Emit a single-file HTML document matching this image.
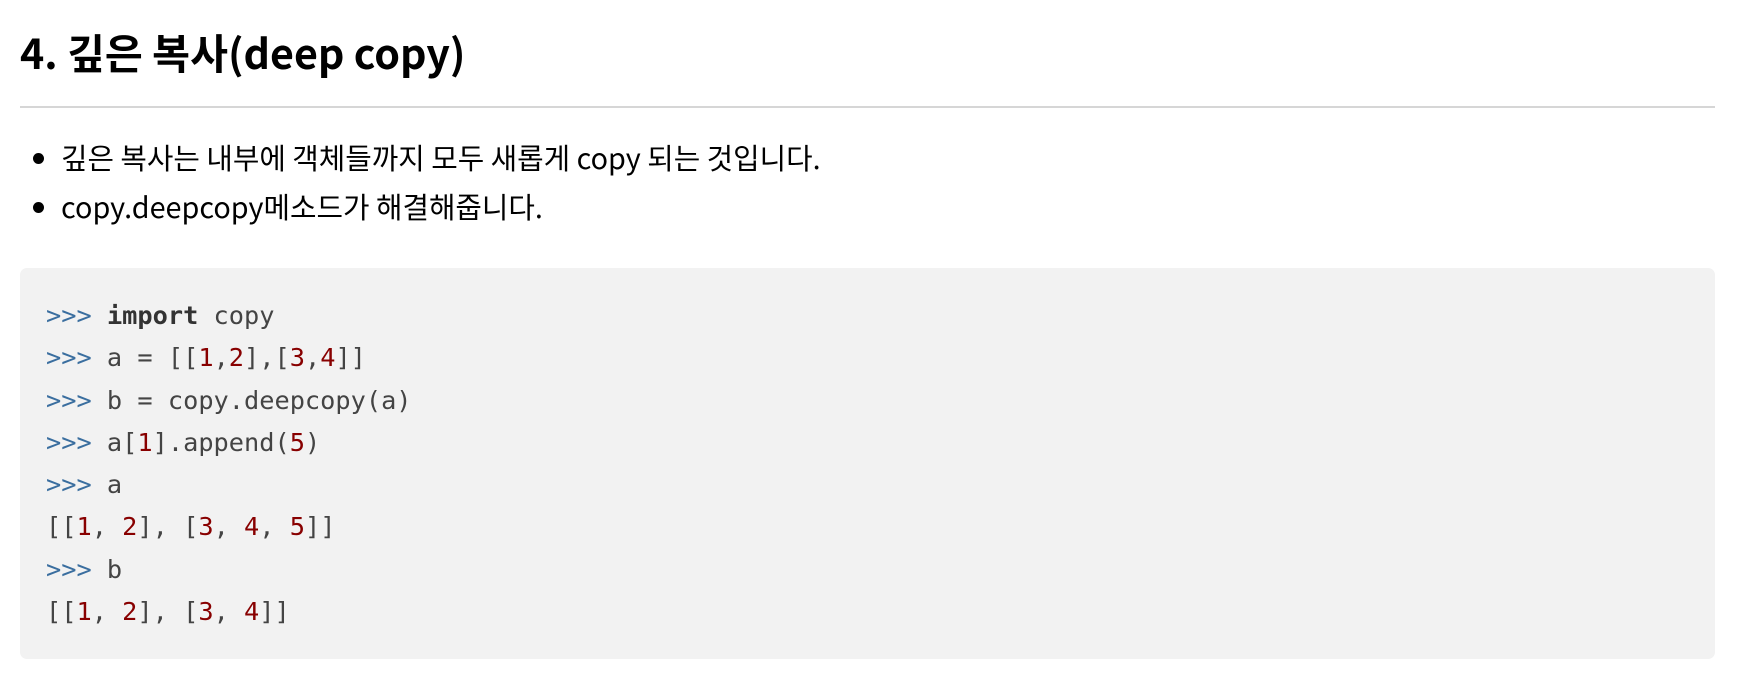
<!DOCTYPE html>
<html><head><meta charset="utf-8"><style>
body{margin:0;background:#fff;width:1744px;height:688px;overflow:hidden;font-family:"Noto Sans CJK KR","Liberation Sans",sans-serif;color:#000}
h1{position:absolute;left:20px;top:24px;margin:0;font-size:41.2px;line-height:54px;font-weight:bold}
.hr{position:absolute;left:20px;top:106px;width:1695px;height:2px;background:#d6d6d6}
ul{position:absolute;left:0;top:133px;margin:0;padding:0 0 0 61px;font-size:28.8px;line-height:49px}
li{margin:0}
pre{position:absolute;left:20px;top:268px;width:1695px;height:391px;margin:0;background:#f2f2f2;border-radius:7px;box-sizing:border-box;padding:27px 26px;font-family:"DejaVu Sans Mono","Liberation Mono",monospace;font-size:25.3px;line-height:42.3px;color:#444}
.p{color:#3a6e9f}.n{color:#880000}b{color:#333}
</style></head><body>
<h1>4. 깊은 복사(deep copy)</h1>
<div class="hr"></div>
<ul><li>깊은 복사는 내부에 객체들까지 모두 새롭게 copy 되는 것입니다.</li><li>copy.deepcopy메소드가 해결해줍니다.</li></ul>
<pre><span class="p">&gt;&gt;&gt;</span> <b>import</b> copy
<span class="p">&gt;&gt;&gt;</span> a = [[<span class="n">1</span>,<span class="n">2</span>],[<span class="n">3</span>,<span class="n">4</span>]]
<span class="p">&gt;&gt;&gt;</span> b = copy.deepcopy(a)
<span class="p">&gt;&gt;&gt;</span> a[<span class="n">1</span>].append(<span class="n">5</span>)
<span class="p">&gt;&gt;&gt;</span> a
[[<span class="n">1</span>, <span class="n">2</span>], [<span class="n">3</span>, <span class="n">4</span>, <span class="n">5</span>]]
<span class="p">&gt;&gt;&gt;</span> b
[[<span class="n">1</span>, <span class="n">2</span>], [<span class="n">3</span>, <span class="n">4</span>]]</pre>
</body></html>
